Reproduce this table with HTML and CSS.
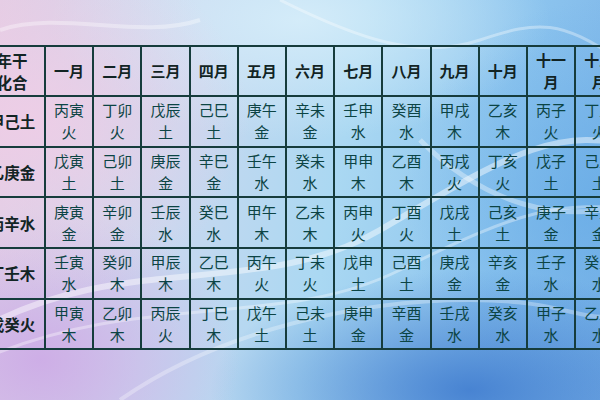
FILE: index.html
```html
<!DOCTYPE html>
<html lang="zh">
<head>
<meta charset="utf-8">
<link rel="stylesheet" href="styles.css">
</head>
<body>
<div class="page">
  <svg class="waves" width="600" height="400" viewBox="0 0 600 400">
    <path d="M-20 330 C 120 250, 260 300, 380 230 S 560 120, 640 150" fill="none" stroke="rgba(255,255,255,0.45)" stroke-width="6"/>
    <path d="M-20 360 C 140 290, 280 330, 400 270 S 560 200, 640 210" fill="none" stroke="rgba(255,255,255,0.35)" stroke-width="3"/>
    <path d="M120 400 C 220 330, 360 300, 470 300 S 580 330, 640 310" fill="none" stroke="rgba(255,255,255,0.3)" stroke-width="4"/>
    <path d="M280 0 C 360 40, 420 60, 480 40 S 560 20, 620 60" fill="none" stroke="rgba(255,255,255,0.35)" stroke-width="3"/>
    <path d="M420 140 C 480 200, 560 230, 640 200" fill="none" stroke="rgba(255,255,255,0.35)" stroke-width="5"/>
    <path d="M0 30 C 60 10, 140 40, 200 20" fill="none" stroke="rgba(255,255,255,0.35)" stroke-width="4"/>
  </svg>
  <div class="grid">
    <div class="c h first">年干<br>化合</div>
    <div class="c h">一月</div>
    <div class="c h">二月</div>
    <div class="c h">三月</div>
    <div class="c h">四月</div>
    <div class="c h">五月</div>
    <div class="c h">六月</div>
    <div class="c h">七月</div>
    <div class="c h">八月</div>
    <div class="c h">九月</div>
    <div class="c h">十月</div>
    <div class="c h">十一<br>月</div>
    <div class="c h">十二<br>月</div>

    <div class="c h first">甲己土</div>
    <div class="c">丙寅<br>火</div><div class="c">丁卯<br>火</div><div class="c">戊辰<br>土</div><div class="c">己巳<br>土</div><div class="c">庚午<br>金</div><div class="c">辛未<br>金</div><div class="c">壬申<br>水</div><div class="c">癸酉<br>水</div><div class="c">甲戌<br>木</div><div class="c">乙亥<br>木</div><div class="c">丙子<br>火</div><div class="c">丁丑<br>火</div>

    <div class="c h first">乙庚金</div>
    <div class="c">戊寅<br>土</div><div class="c">己卯<br>土</div><div class="c">庚辰<br>金</div><div class="c">辛巳<br>金</div><div class="c">壬午<br>水</div><div class="c">癸未<br>水</div><div class="c">甲申<br>木</div><div class="c">乙酉<br>木</div><div class="c">丙戌<br>火</div><div class="c">丁亥<br>火</div><div class="c">戊子<br>土</div><div class="c">己丑<br>土</div>

    <div class="c h first">丙辛水</div>
    <div class="c">庚寅<br>金</div><div class="c">辛卯<br>金</div><div class="c">壬辰<br>水</div><div class="c">癸巳<br>水</div><div class="c">甲午<br>木</div><div class="c">乙未<br>木</div><div class="c">丙申<br>火</div><div class="c">丁酉<br>火</div><div class="c">戊戌<br>土</div><div class="c">己亥<br>土</div><div class="c">庚子<br>金</div><div class="c">辛丑<br>金</div>

    <div class="c h first">丁壬木</div>
    <div class="c">壬寅<br>水</div><div class="c">癸卯<br>木</div><div class="c">甲辰<br>木</div><div class="c">乙巳<br>木</div><div class="c">丙午<br>火</div><div class="c">丁未<br>火</div><div class="c">戊申<br>土</div><div class="c">己酉<br>土</div><div class="c">庚戌<br>金</div><div class="c">辛亥<br>金</div><div class="c">壬子<br>水</div><div class="c">癸丑<br>水</div>

    <div class="c h first">戊癸火</div>
    <div class="c">甲寅<br>木</div><div class="c">乙卯<br>木</div><div class="c">丙辰<br>火</div><div class="c">丁巳<br>木</div><div class="c">戊午<br>土</div><div class="c">己未<br>土</div><div class="c">庚申<br>金</div><div class="c">辛酉<br>金</div><div class="c">壬戌<br>水</div><div class="c">癸亥<br>水</div><div class="c">甲子<br>水</div><div class="c">乙丑<br>水</div>
  </div>
</div>
</body>
</html>
```
FILE: styles.css
```css
html, body {
  margin: 0;
  padding: 0;
}
body {
  width: 600px;
  height: 400px;
  overflow: hidden;
  font-family: "Noto Sans CJK SC", "Noto Sans", sans-serif;
}
.page {
  position: relative;
  width: 600px;
  height: 400px;
  overflow: hidden;
  padding-top: 45px;
  box-sizing: border-box;
  background:
    radial-gradient(ellipse 220px 180px at 30px 120px, rgba(240, 205, 230, 0.85), rgba(240, 205, 230, 0) 100%),
    radial-gradient(ellipse 200px 150px at 40px 360px, rgba(205, 170, 230, 0.9), rgba(205, 170, 230, 0) 100%),
    radial-gradient(ellipse 260px 120px at 470px 390px, rgba(60, 120, 205, 0.85), rgba(60, 120, 205, 0) 100%),
    radial-gradient(ellipse 200px 200px at 600px 200px, rgba(100, 170, 230, 0.7), rgba(100, 170, 230, 0) 100%),
    radial-gradient(ellipse 250px 120px at 300px 20px, rgba(215, 238, 250, 0.9), rgba(215, 238, 250, 0) 100%),
    linear-gradient(100deg, #e2cde4 0%, #c9d8ef 30%, #aad8f2 55%, #8cc4ee 80%, #7cb4e8 100%);
}
.waves {
  position: absolute;
  left: 0;
  top: 0;
}
.grid {
  position: relative;
  margin-left: -22px;
  display: grid;
  grid-template-columns: 66px repeat(12, 48.2px);
  grid-template-rows: 50px repeat(5, 50.7px);
  border-top: 2px solid #163c3c;
  border-left: 2px solid #163c3c;
  width: max-content;
}
.c {
  box-sizing: border-box;
  border-right: 2px solid #163c3c;
  border-bottom: 2px solid #163c3c;
  display: flex;
  align-items: center;
  justify-content: center;
  text-align: center;
  font-size: 15px;
  line-height: 22px;
  color: #0c4444;
  white-space: nowrap;
}
.h {
  font-weight: bold;
  color: #122424;
}
.first {
  font-size: 15.5px;
}
```
